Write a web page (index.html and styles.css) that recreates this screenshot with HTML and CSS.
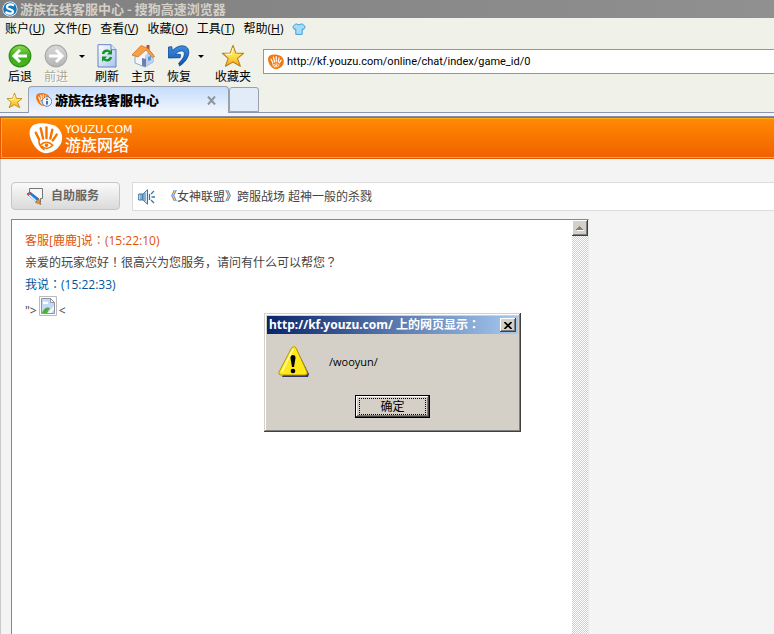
FILE: index.html
```html
<!DOCTYPE html>
<html lang="zh-CN">
<head>
<meta charset="utf-8">
<title>游族在线客服中心</title>
<link rel="stylesheet" href="styles.css">
</head>
<body>
<svg class="defs" width="0" height="0" aria-hidden="true">
  <defs>
    <linearGradient id="green" x2="0" y2="1"><stop offset="0" stop-color="#8edb55"/><stop offset=".5" stop-color="#3fae1e"/><stop offset="1" stop-color="#46b61c"/></linearGradient>
    <linearGradient id="grey" x2="0" y2="1"><stop offset="0" stop-color="#d9d9d9"/><stop offset="1" stop-color="#b4b4b4"/></linearGradient>
    <linearGradient id="gold" x2="0" y2="1"><stop offset="0" stop-color="#fff27a"/><stop offset=".5" stop-color="#ffe04a"/><stop offset="1" stop-color="#f5a81c"/></linearGradient>
    <linearGradient id="blue" x2="0" y2="1"><stop offset="0" stop-color="#3d8fe0"/><stop offset="1" stop-color="#0f4fae"/></linearGradient>
    <linearGradient id="sky" x2="1" y2="1"><stop offset="0" stop-color="#fff"/><stop offset="1" stop-color="#a9c4ee"/></linearGradient>
    <symbol id="star" viewBox="0 0 26 26"><path d="M13 1.500l3 8.300 8.500.3-6.700 5.500 3.200 8.400-8-4.500-8.200 4.500 3-8.400L1.500 10l8.500-.2z" fill="url(#gold)" stroke="#b8801c" stroke-width="1.200" stroke-linejoin="round"/><path d="M13 4.500l-2 6.500-6 .4" fill="none" stroke="#fffbd0" stroke-width="1.200"/></symbol>
    <symbol id="hand" viewBox="0 0 34 34"><path d="M4 3C10 0 22 1 28 5c6 5 7 12 4 18-4 7-12 10-17 9C7 30 1 20 0 12 0 8 1 5 4 3z" fill="currentColor"/><g fill="none" stroke="var(--lines)" stroke-linecap="round"><path d="M6.500 11l3.500 7M11.500 6.500L14 17M17.500 5.500v11M23.500 8L21.500 17M28 13l-4 6" stroke-width="2.500"/><path d="M10 18c-1 5 1 8 5 10.500M11 24c4-4 9-4 13 0-4 4-8 4-11 1" stroke-width="1.600"/></g><circle cx="17.500" cy="24" r="1.800" fill="var(--lines)"/></symbol>
  </defs>
</svg>

<header class="browser">
  <div class="titlebar">
    <svg width="16" height="16" viewBox="0 0 16 16"><circle cx="8" cy="8" r="7.500" fill="#fff"/><circle cx="8" cy="8" r="6.800" fill="#1678bd"/><path d="M12 4.500C8 2 4.500 4 5 6.500c.5 2 6 1.500 6 4C11 13 7 13.500 3.500 11" fill="none" stroke="#fff" stroke-width="2.200"/></svg>
    <span>游族在线客服中心 - 搜狗高速浏览器</span>
  </div>
  <nav class="menu">
    <a href="#">账户(<u>U</u>)</a>
    <a href="#">文件(<u>F</u>)</a>
    <a href="#">查看(<u>V</u>)</a>
    <a href="#">收藏(<u>O</u>)</a>
    <a href="#">工具(<u>T</u>)</a>
    <a href="#">帮助(<u>H</u>)</a>
    <a href="#" aria-label="皮肤"><svg width="14" height="12" viewBox="0 0 14 12"><path d="M4 .8L.8 3.500l1.500 3 1.500-.6v5.500h6.400V5.900l1.500.6 1.500-3L10 .8Q7 3 4 .8z" fill="#a9dcfa" stroke="#3fa0dc"/></svg></a>
  </nav>
  <div class="toolbar">
    <button class="tool"><svg width="24" height="24" viewBox="0 0 24 24"><circle cx="12" cy="12" r="10.800" fill="url(#green)" stroke="#2b9012" stroke-width="1.200"/><path d="M12 6l-6 6 6 6M6.500 12H19" fill="none" stroke="#fff" stroke-width="3"/></svg>后退</button>
    <button class="tool off" disabled><svg width="24" height="24" viewBox="0 0 24 24"><circle cx="12" cy="12" r="10.800" fill="url(#grey)" stroke="#aaa" stroke-width="1.200"/><path d="M12 6l6 6-6 6M17.500 12H5" fill="none" stroke="#fff" stroke-width="3"/></svg>前进</button>
    <button class="drop" aria-label="历史"></button>
    <button class="tool"><svg width="24" height="24" viewBox="0 0 24 24"><path d="M3 .7h13l5 5V23H3z" fill="url(#sky)" stroke="#6783c8"/><path d="M16 .7v5h5" fill="#dce8fb" stroke="#6783c8"/><path d="M8 10c1-4 5-4 7-2M16 13c-1 4-5 4-7 2" fill="none" stroke="#159326" stroke-width="2.400"/><path d="M12 10.500h5V5zM12 12.500H7V18z" fill="#159326"/></svg>刷新</button>
    <button class="tool"><svg width="24" height="24" viewBox="0 0 24 24"><path d="M4 11v8l10 4 8-5v-8l-7-6z" fill="#f2f6fd" stroke="#93a9cc"/><path d="M14 12v11l8-5v-8l-4-3z" fill="#bdd0ee"/><path d="M15.500 1h3v6h-3z" fill="#b94f28"/><path d="M1 11L10 1.500l7 3 6.500 8-2 1L15 6 7 13z" fill="#f6a04a" stroke="#d57525" stroke-width=".8"/><path d="M11 14l4 1v8l-4-1.500z" fill="#6d7fae"/><path d="M17 13l3-1v4l-3 1z" fill="#5c9ade"/></svg>主页</button>
    <button class="tool"><svg width="24" height="24" viewBox="0 0 24 24"><path d="M1.500 3l3.300-.3.600 4C10 1.500 17 .2 20.500 4c3.500 5-.5 13.500-8 18l-.8-3C17 14.500 18.500 9.500 16.500 7.500 14.500 6 11 7.500 8.500 10l5 .5-.3 3.200L1.500 14z" fill="url(#blue)" stroke="#0d4694" stroke-width=".8"/></svg>恢复</button>
    <button class="drop narrow" aria-label="最近关闭"></button>
    <button class="tool wide"><svg width="24" height="24"><use href="#star"/></svg>收藏夹</button>
    <label class="address"><svg class="orange" width="16" height="16"><use href="#hand"/></svg><input type="text" aria-label="地址" value="http://kf.youzu.com/online/chat/index/game_id/0"></label>
  </div>
  <div class="tabs">
    <button class="favstar" aria-label="收藏"><svg width="17" height="17"><use href="#star"/></svg></button>
    <div class="tab">
      <svg class="orange" width="16" height="16" viewBox="0 0 16 16"><use href="#hand" width="14" height="15"/><circle cx="11" cy="9.500" r="4.800" fill="#eef4fc" stroke="#5f87b8"/><path d="M11 6.500v1.500M11 9v3.500" stroke="#1c4fa0" stroke-width="1.600"/></svg>
      <span>游族在线客服中心</span>
      <button class="close" aria-label="关闭标签"><svg width="9" height="9" viewBox="0 0 9 9"><path d="M1 .5l7 8M8 .5l-7 8" stroke="#8d949c" stroke-width="2"/></svg></button>
    </div>
    <button class="newtab" aria-label="新标签"></button>
  </div>
</header>

<div class="brand">
  <svg class="logo" width="34" height="33"><use href="#hand"/></svg>
  <div class="wordmark"><span class="latin">YOUZU.COM</span><span class="cjk">游族网络</span></div>
</div>

<main class="page">
  <div class="bar">
    <button class="self"><svg width="18" height="18" viewBox="0 0 18 18"><path d="M3.500 1.500h13v10h-2v4l-4-4h-7z" fill="#f7f7f7"/><path d="M3.500 5V1.500h13v10h-2v4" fill="none" stroke="#777"/><path d="M1 7l3-2 9 7-2 3.500z" fill="#1f7fd8" stroke="#245a98" stroke-width=".8"/><path d="M2 8l8 7 1-1.200-8-7z" fill="#e4f0fa"/><path d="M9.500 15.500l3-4 2.500 6z" fill="#e8963c" stroke="#7a4a20" stroke-width=".5"/><path d="M.8 7.500L4 5l1.500 1-3 2.800z" fill="#d94a2f"/></svg>自助服务</button>
    <div class="notice"><svg width="17" height="16" viewBox="0 0 17 16"><path d="M.7 5h4v6h-4zM5 5l4.500-4.200v14.400L5 11z" fill="#dbeaf4" stroke="#3b76a3"/><path d="M3 5v6M7 4v8" stroke="#3b76a3"/><path d="M11.500 5v6M13 5l3-3M13.500 8H17M13 11l3 3" fill="none" stroke="#3b76a3" stroke-width="1.300"/></svg><span>《女神联盟》跨服战场 超神一般的杀戮</span></div>
  </div>
  <section class="chat">
    <div class="log">
      <p class="agent">客服[鹿鹿]说<span lang="zh-TW">：</span>(15:22:10)</p>
      <p>亲爱的玩家您好<span lang="zh-TW">！</span>很高兴为您服务，请问有什么可以帮您<span lang="zh-TW">？</span></p>
      <p class="me">我说<span lang="zh-TW">：</span>(15:22:33)</p>
      <p class="raw">"&gt;<svg width="18" height="20" viewBox="0 0 18 20"><path d="M.5.5h17v19H.5z" fill="#fff" stroke="#bbb"/><path d="M2.500 2.500h9l4 4v11h-13z" fill="#c7d9f5" stroke="#8d959e"/><path d="M11.500 2.500v4h4z" fill="#fff" stroke="#8d959e"/><path d="M4 7q1-3 3-1 3-1 2 2H4z" fill="#fff"/><path d="M3 17q3-7 8-5l-3 5z" fill="#4caf37"/><path d="M9 17l6-7v3l-3 4z" fill="#fff"/></svg>&lt;</p>
    </div>
    <div class="scroll"><button aria-label="向上滚动"><svg width="8" height="5" viewBox="0 0 8 5" shape-rendering="crispEdges"><path d="M1 5h7V4H1z" fill="#fff"/><path d="M0 4h7V3H6V2H5V1H4V0H3v1H2v1H1v1H0z" fill="#808080"/></svg></button></div>
  </section>
</main>

<div class="dialog" role="alertdialog" aria-labelledby="dlg-title">
  <div class="caption"><span id="dlg-title">http://kf.youzu.com/ 上的网页显示<span lang="zh-TW">：</span></span><button class="x" aria-label="关闭"><svg width="8" height="7" viewBox="0 0 8 7"><path d="M.5 0l7 7M7.500 0l-7 7" stroke="#000" stroke-width="1.600"/></svg></button></div>
  <div class="message">
    <svg width="32" height="32" viewBox="0 0 32 32"><path d="M16 3l3 1 12 24-1 3H4z" fill="#34346c"/><path d="M15 1q2-1 3 1l11 24q1 3-2 3H3q-3 0-2-3L13 3q1-2 2-2z" fill="#ffe81a" stroke="#b89a00"/><path d="M15 3L4 26" stroke="#fffcb0" stroke-width="1.500"/><path d="M12.500 12q0-3 2.500-3t2.500 3l-1.500 9h-2z"/><circle cx="15" cy="25" r="2.300"/></svg>
    <span>/wooyun/</span>
  </div>
  <button class="ok"><span>确定</span></button>
</div>
</body>
</html>
```
FILE: styles.css
```css
* { box-sizing: border-box; }
body {
  margin: 0;
  min-height: 100vh;
  display: flex;
  flex-direction: column;
  background: #f4f4f4;
  color: #000;
  font: 12px/16px "Open Sans", "Noto Sans CJK SC", sans-serif;
}
button { padding: 0; border: 0; background: none; color: inherit; font: inherit; }
svg { display: block; flex: none; }
p { margin: 0; }
a { color: inherit; text-decoration: none; }
[lang="zh-TW"] { font-family: "Noto Sans CJK TC", sans-serif; line-height: 1; }
.defs { position: absolute; }
.browser { background: #f0f1e9; }

.titlebar {
  display: flex;
  align-items: center;
  gap: 2px;
  height: 18px;
  padding-left: 2px;
  background: linear-gradient(90deg, #808080, #909090);
  color: #d4d0c8;
  font-family: "Noto Sans CJK SC", sans-serif;
  font-weight: bold;
  font-size: 13px;
}
.menu { display: flex; align-items: center; gap: 9px; height: 22px; padding-left: 5px; }

.toolbar { display: flex; height: 46px; padding: 4px 0 0 2px; }
.tool {
  display: flex;
  flex-direction: column;
  align-items: center;
  gap: 1px;
  width: 36px;
  white-space: nowrap;
}
.wide { width: 40px; margin-left: 8px; }
.off { color: #aca899; text-shadow: 1px 1px #fff; }
.drop { width: 15px; height: 24px; display: grid; place-items: center; }
.drop::before { content: ""; border: 3px solid transparent; border-top-color: #000; border-bottom: 0; }
.narrow { width: 8px; }
.address {
  display: flex;
  align-items: center;
  gap: 3px;
  flex: 1;
  height: 25px;
  margin: 5px 0 0 10px;
  padding-left: 4px;
  border: 1px solid #7f9db9;
  border-right: 0;
  background: #fff;
}
.address input { flex: 1; min-width: 0; padding: 0; border: 0; outline: 0; background: none; color: #000; font: 11px Roboto, sans-serif; }
.orange { color: #ee7a16; --lines: #fff; }

.tabs {
  display: flex;
  align-items: flex-end;
  height: 31px;
  padding-bottom: 4px;
  background: linear-gradient(#f0f1e9 26px, #8f95a8 26px, #8f95a8 27px, #f2f4fb 27px, #f2f4fb 30px, #8a8da8 30px);
}
.favstar { width: 28px; height: 26px; display: grid; place-items: center; }
.tab {
  display: flex;
  align-items: center;
  gap: 3px;
  width: 201px;
  height: 27px;
  padding: 0 12px 0 7px;
  border: 1px solid #9ba0aa;
  border-bottom: 0;
  border-radius: 4px 4px 0 0;
  background: linear-gradient(#c5ddfc, #f2f5fd);
  font-family: "Noto Sans CJK SC", sans-serif;
  font-weight: 900;
  font-size: 13px;
}
.close { margin-left: auto; }
.newtab { width: 30px; height: 25px; border: 1px solid #9ba0aa; border-radius: 3px 3px 0 0; background: #e2ecf9; margin-bottom: 1px; }

.brand {
  display: flex;
  align-items: center;
  gap: 2px;
  height: 42px;
  padding-left: 28px;
  border: 1px solid #e45a00;
  border-right: 0;
  box-shadow: inset 1px 1px #ffae12, inset 0 -1px #ffae12;
  background: linear-gradient(#ff8a02, #f16000);
  color: #fff;
}
.logo { --lines: #f57400; }
.wordmark { display: flex; flex-direction: column; }
.latin { font: 11px/11px "DejaVu Sans", sans-serif; }
.cjk { font: 500 16px/18px "Noto Sans CJK SC", sans-serif; }

.page {
  flex: 1;
  display: flex;
  flex-direction: column;
  gap: 8px;
  padding: 22px 0 0 10px;
  border-left: 1px solid #c8c8c8;
  color: #444;
}
.bar { display: flex; gap: 12px; }
.self {
  display: flex;
  align-items: center;
  gap: 7px;
  width: 109px;
  height: 28px;
  margin-top: 1px;
  padding-left: 14px;
  border: 1px solid #c6c6c6;
  border-radius: 4px;
  background: linear-gradient(#fafafa, #dadada);
  color: #666;
  font-weight: bold;
}
.notice {
  flex: 1;
  display: flex;
  align-items: center;
  gap: 10px;
  height: 29px;
  margin-top: 1px;
  padding-left: 5px;
  border: 1px solid #dcdcdc;
  border-right: 0;
  background: #fff;
}
.chat {
  flex: 1;
  display: flex;
  width: 578px;
  max-width: 100%;
  border: 1px solid #868686;
  border-width: 1px 1px 0;
  border-right-color: #ececec;
  background: #fff;
}
.log { flex: 1; padding: 10px 13px; line-height: 22px; }
.agent { color: #e05206; }
.me { color: #00569c; }
.raw { display: flex; align-items: flex-end; gap: 2px; line-height: 10px; }
.scroll { width: 16px; background: repeating-conic-gradient(#d4d0c8 0 25%, #fff 0 50%) 0 0 / 2px 2px; }
.scroll button, .x {
  display: grid;
  place-items: center;
  width: 16px;
  height: 16px;
  background: #d4d0c8;
  box-shadow: inset -1px -1px #404040, inset 1px 1px #fff, inset -2px -2px #808080;
}

.dialog {
  position: absolute;
  left: 264px;
  top: 313px;
  width: 257px;
  padding: 3px 3px 14px;
  background: #d4d0c8;
  box-shadow: inset -1px -1px #404040, inset 1px 1px #d4d0c8, inset -2px -2px #808080, inset 2px 2px #fff;
}
.caption {
  display: flex;
  align-items: center;
  justify-content: space-between;
  height: 18px;
  padding: 0 2px;
  background: linear-gradient(90deg, #0a246a, #a6caf0);
  color: #fff;
  font: bold 12px/18px "Noto Sans", "Noto Sans CJK SC", sans-serif;
  white-space: nowrap;
}
.x { height: 14px; }
.message { display: flex; align-items: center; gap: 19px; padding: 12px 0 0 11px; font-size: 11px; }
.ok {
  display: block;
  width: 75px;
  height: 23px;
  margin: 17px auto 0;
  padding: 2px;
  border: 1px solid #000;
  background: #d4d0c8;
  box-shadow: inset -1px -1px #404040, inset 1px 1px #fff, inset -2px -2px #808080;
}
.ok span { display: block; border: 1px dotted #000; line-height: 15px; margin: 0 1px; }
```
